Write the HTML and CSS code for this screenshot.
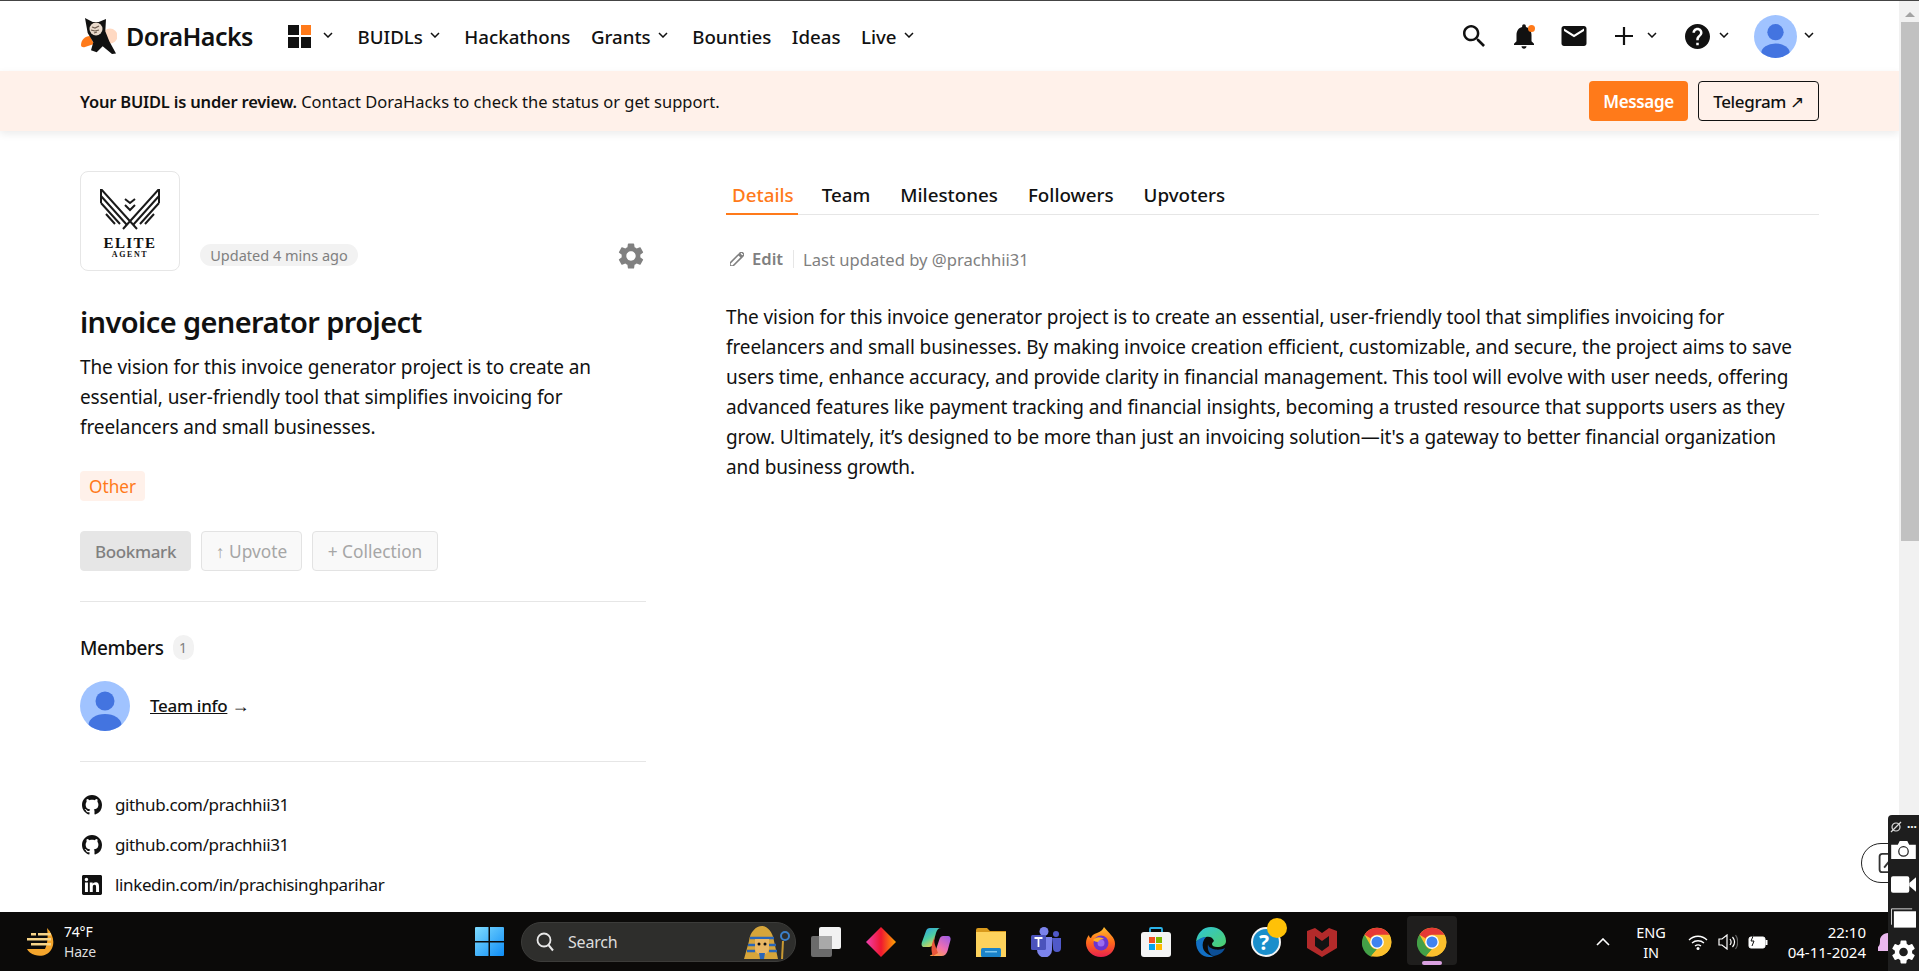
FILE: index.html
```html
<!DOCTYPE html>
<html lang="en">
<head>
<meta charset="utf-8">
<title>invoice generator project - DoraHacks</title>
<link rel="stylesheet" href="styles.css">
</head>
<body>
<svg class="defs" width="0" height="0" aria-hidden="true">
  <symbol id="chev" viewBox="0 0 10 6"><path d="M1 1l4 4 4-4" fill="none" stroke="currentColor" stroke-width="1.5"/></symbol>
  <symbol id="avatar" viewBox="0 0 50 50">
    <clipPath id="avc"><circle cx="25" cy="25" r="25"/></clipPath>
    <circle cx="25" cy="25" r="25" fill="#a0c3ff"/>
    <g clip-path="url(#avc)" fill="#4374e0"><circle cx="25" cy="20" r="9.5"/><ellipse cx="25" cy="44" rx="16.5" ry="11"/></g>
  </symbol>
  <symbol id="gh" viewBox="0 0 16 16"><path d="M8 0C3.58 0 0 3.58 0 8c0 3.54 2.29 6.53 5.47 7.59.4.07.55-.17.55-.38 0-.19-.01-.82-.01-1.49-2.01.37-2.53-.49-2.69-.94-.09-.23-.48-.94-.82-1.13-.28-.15-.68-.52-.01-.53.63-.01 1.08.58 1.23.82.72 1.21 1.87.87 2.33.66.07-.52.28-.87.51-1.07-1.78-.2-3.64-.89-3.64-3.95 0-.87.31-1.59.82-2.15-.08-.2-.36-1.02.08-2.12 0 0 .67-.21 2.2.82.64-.18 1.32-.27 2-.27.68 0 1.36.09 2 .27 1.53-1.04 2.2-.82 2.2-.82.44 1.1.16 1.92.08 2.12.51.56.82 1.27.82 2.15 0 3.07-1.87 3.75-3.65 3.95.29.25.54.73.54 1.48 0 1.07-.01 1.93-.01 2.2 0 .21.15.46.55.38A8.013 8.013 0 0016 8c0-4.42-3.58-8-8-8z" fill="#111"/></symbol>
  <symbol id="chrome" viewBox="0 0 48 48">
    <circle cx="24" cy="24" r="23" fill="#fbc02d"/>
    <path d="M24 1a23 23 0 0 1 19.9 11.5H24a11.5 11.5 0 0 0-10 5.8L4.1 12.5A23 23 0 0 1 24 1z" fill="#e53935"/>
    <path d="M4.1 12.5L14 29.8a11.5 11.5 0 0 0 10 5.7L14 47A23 23 0 0 1 4.1 12.5z" fill="#43a047"/>
    <path d="M14 47l10-11.5a11.5 11.5 0 0 0 10-5.7l9.9-17.3A23 23 0 0 1 24 47z" fill="#fbc02d"/>
    <circle cx="24" cy="24" r="11" fill="#fff"/><circle cx="24" cy="24" r="8.8" fill="#3f83f0"/>
  </symbol>
</svg>

<div class="screen">
  <div class="browser">
    <div class="page">
      <header class="nav">
        <div class="brand">
          <svg class="cat" viewBox="0 0 37 36">
            <circle cx="30" cy="18" r="7.500" fill="#ffd9c2"/>
            <path d="M1 27c0-5 4-9 9-9l4 8-9 3c-2 .5-4 0-4-2z" fill="#ff7a1a"/>
            <path d="M5 0l7.700 4h6l7.300-3-.7 12.300 4 10 6.700 12.200-4 0.500-9.300-7.700-6 6-5.700-2 2.300-8-5.600-9.300z" fill="#111"/>
            <circle cx="16" cy="11" r="6.500" fill="#e8d9cb"/>
            <path d="M12 9l3 1 4-2M11 12l4 1 4-1M14 15l3-1" stroke="#6b5a4d" stroke-width="1.200" fill="none"/>
          </svg>
          <span class="brand-name">DoraHacks</span>
        </div>
        <nav class="menu">
          <div class="menu-item">
            <span class="grid-icon"><i></i><i class="hot"></i><i></i><i></i></span>
            <svg class="chev"><use href="#chev"/></svg>
          </div>
          <a class="menu-item">BUIDLs<svg class="chev"><use href="#chev"/></svg></a>
          <a class="menu-item">Hackathons</a>
          <a class="menu-item">Grants<svg class="chev"><use href="#chev"/></svg></a>
          <a class="menu-item">Bounties</a>
          <a class="menu-item">Ideas</a>
          <a class="menu-item">Live<svg class="chev"><use href="#chev"/></svg></a>
        </nav>
        <div class="tools">
          <svg class="tool t-search" viewBox="3 3 17.5 17.5"><path d="M15.5 14h-.79l-.28-.27C15.41 12.59 16 11.11 16 9.5 16 5.91 13.09 3 9.5 3S3 5.91 3 9.5 5.91 16 9.5 16c1.61 0 3.09-.59 4.23-1.57l.27.28v.79l5 4.99L20.49 19l-4.99-5zm-6 0C7.01 14 5 11.99 5 9.5S7.01 5 9.5 5 14 7.01 14 9.5 11.99 14 9.5 14z" fill="#111"/></svg>
          <span class="bell-wrap">
            <svg class="tool t-bell" viewBox="4 2.5 16 19.5"><path d="M12 22c1.1 0 2-.9 2-2h-4c0 1.1.9 2 2 2zm6-6v-5c0-3.07-1.63-5.64-4.5-6.32V4c0-.83-.67-1.5-1.5-1.5s-1.5.67-1.5 1.5v.68C7.64 5.36 6 7.92 6 11v5l-2 2v1h16v-1l-2-2z" fill="#111"/></svg>
            <i class="dot"></i>
          </span>
          <svg class="tool t-mail" viewBox="2 4 20 16"><path d="M20 4H4c-1.1 0-2 .9-2 2v12c0 1.1.9 2 2 2h16c1.1 0 2-.9 2-2V6c0-1.1-.9-2-2-2zm0 4-8 5-8-5V6l8 5 8-5v2z" fill="#111"/></svg>
          <span class="tool-group g-plus">
            <svg class="tool t-plus" viewBox="0 0 18 18"><path d="M9 0v18M0 9h18" stroke="#111" stroke-width="2.2"/></svg>
            <svg class="chev"><use href="#chev"/></svg>
          </span>
          <span class="tool-group g-help">
            <svg class="tool t-help" viewBox="2 2 20 20"><path d="M12 2C6.48 2 2 6.48 2 12s4.48 10 10 10 10-4.48 10-10S17.52 2 12 2zm1 17h-2v-2h2v2zm2.07-7.75-.9.92C13.45 12.9 13 13.5 13 15h-2v-.5c0-1.1.45-2.1 1.17-2.83l1.24-1.26c.37-.36.59-.86.59-1.41 0-1.1-.9-2-2-2s-2 .9-2 2H8c0-2.21 1.79-4 4-4s4 1.79 4 4c0 .88-.36 1.68-.93 2.25z" fill="#111"/></svg>
            <svg class="chev"><use href="#chev"/></svg>
          </span>
          <span class="tool-group g-user">
            <svg class="nav-avatar"><use href="#avatar"/></svg>
            <svg class="chev"><use href="#chev"/></svg>
          </span>
        </div>
      </header>

      <div class="banner">
        <p class="banner-text"><strong>Your BUIDL is under review.</strong> Contact DoraHacks to check the status or get support.</p>
        <div class="banner-actions">
          <a class="btn-message">Message</a>
          <a class="btn-telegram">Telegram ↗</a>
        </div>
      </div>

      <main class="content">
        <aside class="side">
          <div class="head-row">
            <div class="logo-box">
              <svg class="wings" viewBox="0 0 60 41">
                <g fill="none" stroke="#1a1a1a" stroke-width="2">
                  <path d="M1 14V0l36 40M1 7l26 29M1 14l19 21M6 25l9 10"/>
                  <path d="M59 14V0L23 40M59 7L33 36M59 14L40 35M54 25l-9 10"/>
                  <path d="M25 10l5 4 5-4M25 16l5 5 5-5"/>
                </g>
              </svg>
              <span class="elite">ELITE</span>
              <span class="agent">AGENT</span>
            </div>
            <span class="updated">Updated 4 mins ago</span>
            <svg class="gear" viewBox="2.5 2 19 20"><path d="M19.14 12.94c.04-.3.06-.61.06-.94 0-.32-.02-.64-.07-.94l2.03-1.58c.18-.14.23-.41.12-.61l-1.92-3.32c-.12-.22-.37-.29-.59-.22l-2.39.96c-.5-.38-1.03-.7-1.62-.94l-.36-2.54c-.04-.24-.24-.41-.48-.41h-3.84c-.24 0-.43.17-.47.41l-.36 2.54c-.59.24-1.13.57-1.62.94l-2.39-.96c-.22-.08-.47 0-.59.22L2.74 8.87c-.12.21-.08.47.12.61l2.03 1.58c-.05.3-.09.63-.09.94s.02.64.07.94l-2.03 1.58c-.18.14-.23.41-.12.61l1.92 3.32c.12.22.37.29.59.22l2.39-.96c.5.38 1.03.7 1.62.94l.36 2.54c.05.24.24.41.48.41h3.84c.24 0 .44-.17.47-.41l.36-2.54c.59-.24 1.13-.56 1.62-.94l2.39.96c.22.08.47 0 .59-.22l1.92-3.32c.12-.22.07-.47-.12-.61l-2.01-1.58zM12 15.6c-1.98 0-3.6-1.62-3.6-3.6s1.62-3.6 3.6-3.6 3.6 1.62 3.6 3.6-1.62 3.6-3.6 3.6z" fill="#808080"/></svg>
          </div>
          <h1 class="title">invoice generator project</h1>
          <p class="summary">The vision for this invoice generator project is to create an essential, user-friendly tool that simplifies invoicing for freelancers and small businesses.</p>
          <span class="tag">Other</span>
          <div class="actions">
            <a class="act act-bookmark">Bookmark</a>
            <a class="act act-upvote">↑ Upvote</a>
            <a class="act act-collection">+ Collection</a>
          </div>
          <div class="members">
            <div class="members-head"><span class="members-title">Members</span><span class="count">1</span></div>
            <div class="team">
              <svg class="team-avatar"><use href="#avatar"/></svg>
              <span class="team-link"><u>Team info</u> <span class="go">→</span></span>
            </div>
          </div>
          <ul class="links">
            <li><svg class="link-icon"><use href="#gh"/></svg>github.com/prachhii31</li>
            <li><svg class="link-icon"><use href="#gh"/></svg>github.com/prachhii31</li>
            <li><svg class="link-icon" viewBox="0 0 24 24"><path d="M20.447 20.452h-3.554v-5.569c0-1.328-.027-3.037-1.852-3.037-1.853 0-2.136 1.445-2.136 2.939v5.667H9.351V9h3.414v1.561h.046c.477-.9 1.637-1.85 3.37-1.85 3.601 0 4.267 2.37 4.267 5.455v6.286zM5.337 7.433c-1.144 0-2.063-.926-2.063-2.065 0-1.138.92-2.063 2.063-2.063 1.14 0 2.064.925 2.064 2.063 0 1.139-.925 2.065-2.064 2.065zm1.782 13.019H3.555V9h3.564v11.452zM22.225 0H1.771C.792 0 0 .774 0 1.729v20.542C0 23.227.792 24 1.771 24h20.451C23.2 24 24 23.227 24 22.271V1.729C24 .774 23.2 0 22.222 0h.003z" fill="#111"/></svg>linkedin.com/in/prachisinghparihar</li>
          </ul>
        </aside>

        <section class="detail">
          <div class="tabs">
            <a class="tab tab-on">Details</a>
            <a class="tab">Team</a>
            <a class="tab">Milestones</a>
            <a class="tab">Followers</a>
            <a class="tab">Upvoters</a>
          </div>
          <div class="edit-row">
            <svg class="pencil" viewBox="3 3 18 18"><path d="M3 17.25V21h3.75L17.81 9.94l-3.75-3.75L3 17.25zM20.71 7.04c.39-.39.39-1.02 0-1.41l-2.34-2.34a.9959.9959 0 00-1.41 0l-1.83 1.83 3.75 3.75 1.83-1.83z" fill="none" stroke="#808080" stroke-width="2"/></svg>
            <span class="edit">Edit</span>
            <span class="last">Last updated by @prachhii31</span>
          </div>
          <p class="vision">The vision for this invoice generator project is to create an essential, user-friendly tool that simplifies invoicing for freelancers and small businesses. By making invoice creation efficient, customizable, and secure, the project aims to save users time, enhance accuracy, and provide clarity in financial management. This tool will evolve with user needs, offering advanced features like payment tracking and financial insights, becoming a trusted resource that supports users as they grow. Ultimately, it’s designed to be more than just an invoicing solution—it's a gateway to better financial organization and business growth.</p>
        </section>
      </main>
    </div>
    <div class="scrollbar">
      <span class="arrow"></span>
      <span class="thumb"></span>
    </div>
  </div>

  <footer class="taskbar">
    <div class="weather">
      <svg class="weather-icon" viewBox="0 0 30 28">
        <path d="M22 0c7 7 8 16 4 22-3 5-10 7-16 5-4-1-7-4-8-6h18c3-6 3-14 2-21z" fill="#f4a52c"/>
        <g fill="#f7d488"><rect x="6" y="5" width="5" height="2.5"/><rect x="13" y="5" width="13" height="2.5"/><rect x="2" y="10" width="24" height="2.5"/><rect x="6" y="15" width="20" height="2.5"/></g>
      </svg>
      <div class="weather-text"><span class="temp">74°F</span><span class="haze">Haze</span></div>
    </div>
    <div class="center">
      <svg class="win" viewBox="0 0 29 29">
        <defs><linearGradient id="wg" x1="0" y1="0" x2="1" y2="1"><stop offset="0" stop-color="#7fdcff"/><stop offset="1" stop-color="#0e8cf5"/></linearGradient></defs>
        <path d="M0 1a1 1 0 0 1 1-1h12.5v14H0zM15 0h13a1 1 0 0 1 1 1v13H15zM0 15.500h13.500V29H1a1 1 0 0 1-1-1zM15 15.500h14V28a1 1 0 0 1-1 1H15z" fill="url(#wg)"/>
      </svg>
      <div class="search">
        <svg class="search-icon" viewBox="0 0 18 20"><circle cx="8" cy="8" r="6.500" fill="none" stroke="#e8e8e8" stroke-width="1.800"/><path d="M12.500 13l4.500 5.500" stroke="#e8e8e8" stroke-width="2"/></svg>
        <span class="search-text">Search</span>
        <svg class="pharaoh" viewBox="0 0 54 34">
          <path d="M8 34l5-18c1-9 7-15 13-15s11 7 12 15l4 18z" fill="#d6a53a"/>
          <path d="M14 13h24M12 20h7M33 20h7M11 26h8M33 26h8" stroke="#2a66b8" stroke-width="2.500" fill="none"/>
          <path d="M19 14h14v9c0 4-3 7-7 7s-7-3-7-7z" fill="#e9b765"/>
          <circle cx="23" cy="19" r="1.500" fill="#111"/><circle cx="29" cy="19" r="1.500" fill="#111"/>
          <path d="M23 28h6l-1 6h-4z" fill="#2a66b8"/>
          <path d="M46 34l1-18" stroke="#c99a33" stroke-width="2"/>
          <circle cx="49" cy="11" r="4" fill="none" stroke="#3b7fc9" stroke-width="2"/>
        </svg>
      </div>
      <div class="apps-row">
        <svg class="app" viewBox="0 0 30 30"><rect x="0" y="9" width="21" height="21" rx="2" fill="#6b6b6b"/><rect x="8" y="0" width="22" height="22" rx="2" fill="#f2f2f2"/><rect x="8" y="9" width="13" height="13" fill="#a9a9a9"/></svg>
        <svg class="app" viewBox="0 0 30 30"><defs><linearGradient id="dg" x1="0" y1="0" x2="1" y2="0"><stop offset="0" stop-color="#f040b0"/><stop offset=".5" stop-color="#f01830"/><stop offset="1" stop-color="#ffa500"/></linearGradient></defs><path d="M15 0l15 15-15 15L0 15z" fill="url(#dg)"/></svg>
        <svg class="app" viewBox="0 0 30 30"><defs><linearGradient id="cg1" x1="0" y1="0" x2=".6" y2="1"><stop offset="0" stop-color="#2a9ee8"/><stop offset=".55" stop-color="#4fd0a0"/><stop offset="1" stop-color="#f6d24a"/></linearGradient><linearGradient id="cg2" x1="1" y1="0" x2=".3" y2="1"><stop offset="0" stop-color="#9a5ae8"/><stop offset=".6" stop-color="#f070b0"/><stop offset="1" stop-color="#f8a24a"/></linearGradient></defs><path d="M9 1h11c-3 0-4 2-5 5l-3 11c-.5 2-2 3-4 3H3c-2 0-3-2-2-5L5 4c.6-2 2-3 4-3z" fill="url(#cg1)"/><path d="M22 9h5c2 0 3 2 2.500 4l-3 11c-1 3-3 5-6 5h-10c-2 0-2-1-1-1 2 0 4-2 5-4l4-12c.7-2 2-3 3.500-3z" fill="url(#cg2)"/><path d="M14 8c-1 4-1 7 0 10l3 8-5 3c-2-4-2-10 0-15z" fill="#e8553a"/></svg>
        <svg class="app" viewBox="0 0 30 30"><path d="M0 3a2 2 0 0 1 2-2h9l3 3h16v3H0z" fill="#d99a1c"/><rect x="0" y="5" width="30" height="25" fill="#fdd25c"/><rect x="5" y="21" width="20" height="9" rx="1.500" fill="#1b83c9"/><rect x="9" y="24" width="12" height="1.500" fill="#7cc6ee"/></svg>
        <svg class="app" viewBox="0 0 30 30"><circle cx="13" cy="4.500" r="4.500" fill="#7b83eb"/><circle cx="25" cy="7" r="3" fill="#5059c9"/><path d="M21 11h9v10a4 4 0 0 1-8 0z" fill="#5059c9"/><path d="M6 10h15v13a6 6 0 0 1-15 0z" fill="#7b83eb"/><rect x="0" y="8" width="15" height="15" rx="1.500" fill="#4b53bc"/><path d="M3.500 11h8M7.500 11v9" stroke="#fff" stroke-width="1.800"/></svg>
        <svg class="app" viewBox="0 0 30 30"><defs><linearGradient id="ff" x1="0" y1="0" x2="0" y2="1"><stop offset="0" stop-color="#ffbd2e"/><stop offset=".5" stop-color="#ff6b1a"/><stop offset="1" stop-color="#e8204e"/></linearGradient></defs><path d="M18 0c2 3 5 5 7 8 3 3 4 6 4 9 0 7-6 13-14 13S0 24 0 16c0-3 1-6 3-8 0 2 1 3 2 3 1-3 3-4 6-5 3-1 6-3 7-6z" fill="url(#ff)"/><circle cx="15" cy="16" r="7.500" fill="#6a35d0"/><circle cx="15" cy="16" r="3.500" fill="#9a6cf0"/><path d="M7 13c4-4 8-3 11-1-3 0-5 1-6 3-2 0-4-1-5-2z" fill="#ffb02a"/></svg>
        <svg class="app" viewBox="0 0 30 30"><path d="M9 6V2a1 1 0 0 1 1-1h10a1 1 0 0 1 1 1v4" fill="none" stroke="#2bb4ea" stroke-width="1.800"/><rect x="0" y="5" width="30" height="25" rx="3" fill="#f4f4f4"/><rect x="8" y="10" width="6" height="6" fill="#f25022"/><rect x="15" y="10" width="6" height="6" fill="#7fba00"/><rect x="8" y="17" width="6" height="6" fill="#00a4ef"/><rect x="15" y="17" width="6" height="6" fill="#ffb900"/></svg>
        <svg class="app" viewBox="0 0 30 30"><defs><linearGradient id="eg" x1="0" y1="0" x2="1" y2="1"><stop offset="0" stop-color="#2ec4d8"/><stop offset="1" stop-color="#4fd06a"/></linearGradient></defs><path d="M0 15C1 6 7 0 15 0c8 0 15 6 15 14 0 4-4 6-9 6-3 0-5-1-5-3 0-1 1-2 2-3-1-4-5-5-8-4-5 1-8 3-10 5z" fill="url(#eg)"/><path d="M0 15c2-3 6-5 10-5-3 3-4 7-3 11 1 4 6 8 11 8-2 1-3 1-5 1C6 30 0 24 0 15z" fill="#1270c4"/><path d="M18 29c5-1 9-3 11-8-3 2-9 2-12 1-3-1-5-3-5-5-1 5 1 11 6 12z" fill="#0c4f96"/></svg>
        <span class="help-app">
          <svg class="app" viewBox="0 0 30 30"><circle cx="15" cy="15" r="14" fill="#1a8ecb" stroke="#f4f4f4" stroke-width="2"/></svg>
          <span class="help-q">?</span>
          <i class="help-badge"></i>
        </span>
        <svg class="app" viewBox="0 0 30 30"><path d="M0 4l8-3 7 5 7-5 8 3v17l-15 9L0 21z" fill="#b32a2a"/><path d="M8 9l7 5 7-5v10l-7 5-7-5z" fill="#131313"/></svg>
        <svg class="app"><use href="#chrome"/></svg>
        <span class="active-app">
          <svg class="app"><use href="#chrome"/></svg>
          <i class="indicator"></i>
        </span>
      </div>
    </div>
    <div class="tray">
      <svg class="tray-up" viewBox="0 0 14 8"><path d="M1 7l6-6 6 6" fill="none" stroke="#fff" stroke-width="1.600"/></svg>
      <div class="lang"><span>ENG</span><span>IN</span></div>
      <svg class="tray-wifi" viewBox="0 0 20 16"><g fill="none" stroke="#fff" stroke-width="1.300"><path d="M1 6c5-5 13-5 18 0M4 9c3.500-3 8.500-3 12 0M7 12c2-1.500 4-1.500 6 0"/></g><circle cx="10" cy="14.500" r="1.500" fill="#fff"/></svg>
      <svg class="tray-sound" viewBox="0 0 20 16"><path d="M1 5h3l5-4v14l-5-4H1z" fill="none" stroke="#fff" stroke-width="1.200"/><path d="M12 5c1.500 2 1.500 4 0 6M14.500 3c2.500 3 2.500 7 0 10" fill="none" stroke="#fff" stroke-width="1.200"/><path d="M17.500 1c3 4 3 10 0 14" fill="none" stroke="#666" stroke-width="1.200"/></svg>
      <svg class="tray-batt" viewBox="0 0 20 16"><rect x="1" y="3" width="16" height="11" rx="2" fill="#fff" stroke="#fff"/><rect x="17.500" y="6" width="2" height="5" fill="#fff"/><path d="M6 0L3 7h3L4 12" fill="#fff" stroke="#111"/></svg>
      <div class="clock"><span>22:10</span><span>04-11-2024</span></div>
    </div>
  </footer>

  <div class="float-pill"><svg class="float-icon" viewBox="0 0 16 24"><path d="M14 2H4a3 3 0 0 0-3 3v14a3 3 0 0 0 3 3h10" fill="none" stroke="#333" stroke-width="2"/><path d="M6 17l8-10" stroke="#333" stroke-width="2"/></svg></div>
  <svg class="tray-bell" viewBox="0 0 12 20"><path d="M0 14c2-2 2-4 2-7s3-7 8-7h2v18H0z" fill="#eab8ee"/></svg>
  <aside class="widget">
    <div class="widget-top">
      <svg class="w-link" viewBox="0 0 12 12"><circle cx="6" cy="6" r="4" fill="none" stroke="#ddd" stroke-width="1.200"/><path d="M1 11L11 1" stroke="#ddd" stroke-width="1.200"/></svg>
      <span class="w-dots">···</span>
    </div>
    <svg class="w-cam" viewBox="0 0 26 19"><path d="M0 4h7l2-4h8l2 4h7v15H0z" fill="#fff"/><circle cx="13" cy="11" r="5" fill="none" stroke="#222" stroke-width="1.300"/></svg>
    <svg class="w-vid" viewBox="0 0 26 17"><rect x="0" y="0" width="19" height="17" rx="2" fill="#fff"/><path d="M19 7l7-6v15l-7-6z" fill="#fff"/></svg>
    <svg class="w-win" viewBox="0 0 26 20"><path d="M.500 17V.500H22" fill="none" stroke="#ddd" stroke-width="1"/><rect x="3" y="3" width="23" height="17" fill="#fff"/></svg>
    <svg class="w-gear" viewBox="2.500 2 19 20"><path d="M19.140 12.940c.04-.3.06-.61.06-.94 0-.32-.02-.64-.07-.94l2.030-1.580c.18-.14.23-.41.12-.61l-1.920-3.320c-.12-.22-.37-.29-.59-.22l-2.390.96c-.5-.38-1.030-.7-1.620-.94l-.36-2.540c-.04-.24-.24-.41-.48-.41h-3.840c-.24 0-.43.17-.47.41l-.36 2.540c-.59.24-1.130.57-1.620.94l-2.390-.96c-.22-.08-.47 0-.59.22L2.740 8.870c-.12.21-.08.47.12.61l2.030 1.580c-.05.3-.09.63-.09.94s.02.64.07.94l-2.030 1.580c-.18.14-.23.41-.12.61l1.920 3.320c.12.22.37.29.59.22l2.390-.96c.5.38 1.030.7 1.620.94l.36 2.54c.05.24.24.41.48.41h3.840c.24 0 .44-.17.47-.41l.36-2.54c.59-.24 1.130-.56 1.620-.94l2.39.96c.22.08.47 0 .59-.22l1.920-3.320c.12-.22.07-.47-.12-.61l-2.010-1.580zM12 15.600c-1.980 0-3.600-1.620-3.600-3.600s1.620-3.600 3.600-3.600 3.600 1.620 3.600 3.600-1.620 3.600-3.600 3.600z" fill="#fff"/></svg>
  </aside>
</div>
</body>
</html>
```
FILE: styles.css
```css
* { box-sizing: border-box; }
html, body { margin: 0; height: 100%; overflow: hidden; }
body { font-family: "Noto Sans", "Open Sans", sans-serif; color: #111; background: #fff; }
p, h1, ul { margin: 0; padding: 0; }
ul { list-style: none; }
a { color: inherit; text-decoration: none; }
.defs { position: absolute; }
.screen { position: relative; height: 971px; display: flex; flex-direction: column; border-top: 1px solid #444; }

.browser { height: 911px; display: flex; overflow: hidden; }
.page { width: 1899px; flex: none; overflow: hidden; }
.scrollbar { width: 20px; flex: none; background: #f1f1f1; display: flex; flex-direction: column; align-items: center; padding: 0 0 0 2px; }
.arrow { width: 0; height: 0; margin: 11px 0 5px; border: 5px solid transparent; border-top: 0; border-bottom: 5px solid #a3a3a3; }
.thumb { width: 100%; height: 519px; background: #c1c1c1; }

.nav { height: 70px; display: flex; align-items: center; padding: 0 0 0 80px; }
.brand { display: flex; align-items: center; width: 208px; flex: none; }
.cat { width: 37px; height: 36px; margin-right: 9px; flex: none; }
.brand-name { font-size: 25px; font-weight: 600; letter-spacing: -.55px; }
.menu { display: flex; align-items: center; gap: 20.500px; }
.menu-item { display: flex; align-items: center; font-size: 18.700px; font-weight: 500; }
.grid-icon { width: 23px; height: 23px; display: grid; grid-template-columns: 1fr 1fr; gap: 2px; margin-right: 5px; }
.grid-icon i { background: #111; }
.grid-icon .hot { background: #ff7a1a; }
.chev { width: 10px; height: 6px; color: #111; margin: -2px 4px 0 7px; flex: none; }
.tools { margin-left: auto; display: flex; align-items: center; padding-right: 81px; }
.tool { display: block; flex: none; }
.t-search { width: 22px; height: 22px; }
.bell-wrap { position: relative; display: block; margin-left: 29px; }
.t-bell { width: 20px; height: 25px; }
.dot { position: absolute; right: -1px; top: 1px; width: 7px; height: 7px; border-radius: 50%; background: #ff7a1a; }
.t-mail { width: 26px; height: 20px; margin-left: 27px; }
.tool-group { display: flex; align-items: center; }
.g-plus { margin-left: 28px; }
.t-plus { width: 18px; height: 18px; margin-right: 7px; }
.g-help { margin-left: 24px; }
.t-help { width: 25px; height: 25px; margin-right: 2px; }
.g-user { margin-left: 21px; }
.nav-avatar { width: 43px; height: 43px; flex: none; }

.banner { height: 60px; background: #fff1ea; display: flex; align-items: center; justify-content: space-between; padding: 0 80px; box-shadow: 0 3px 8px rgba(0,0,0,.08); position: relative; }
.banner-text { font-size: 16.500px; }
.banner-text strong { font-weight: 600; letter-spacing: -.2px; }
.banner-actions { display: flex; gap: 10px; }
.btn-message, .btn-telegram { height: 40px; display: flex; align-items: center; justify-content: center; border-radius: 4px; font-size: 17px; letter-spacing: -.35px; font-weight: 500; }
.btn-message { width: 99px; background: #ff7a1a; color: #fff; font-weight: 600; }
.btn-telegram { width: 121px; border: 1px solid #111; }

.content { display: flex; padding: 40px 80px 0; gap: 80px; }
.side { width: 566px; flex: none; }
.head-row { display: flex; align-items: flex-end; position: relative; }
.logo-box { width: 100px; height: 100px; border: 1px solid #e6e6e6; border-radius: 8px; display: flex; flex-direction: column; align-items: center; padding-top: 17px; }
.wings { width: 60px; height: 41px; flex: none; }
.elite { font-family: "Liberation Serif", serif; font-weight: 700; font-size: 15px; letter-spacing: 1.400px; line-height: 14px; margin-top: 6px; }
.agent { font-family: "Liberation Serif", serif; font-weight: 700; font-size: 8px; letter-spacing: 1.600px; line-height: 8px; margin-top: 1px; }
.updated { margin: 0 0 5px 20px; width: 158px; height: 22px; display: flex; align-items: center; justify-content: center; background: #f2f2f2; border-radius: 11px; color: #808080; font-size: 14.500px; }
.gear { width: 26px; height: 26px; position: absolute; left: 538px; top: 72px; }
.title { font-size: 29px; font-weight: 600; letter-spacing: -.6px; line-height: 40px; margin-top: 31px; }
.summary { font-size: 19px; letter-spacing: -.1px; line-height: 30px; margin-top: 10px; }
.tag { display: flex; width: fit-content; align-items: center; height: 30px; padding: 0 9px; margin-top: 29px; border-radius: 4px; background: #fff1ea; color: #ff7a1a; font-size: 17.200px; }
.actions { display: flex; gap: 10px; margin-top: 30px; }
.act { height: 40px; display: flex; align-items: center; justify-content: center; border-radius: 4px; font-size: 17.300px; color: #a6a6a6; background: #f9f9f9; border: 1px solid #e3e3e3; }
.act-bookmark { width: 111px; background: #e6e6e6; border-color: #e6e6e6; color: #808080; font-weight: 500; font-size: 17px; letter-spacing: -.35px; }
.act-upvote { width: 101px; }
.act-collection { width: 126px; }
.members { margin-top: 30px; border-top: 1px solid #e6e6e6; border-bottom: 1px solid #e6e6e6; padding: 33px 0 30px; }
.members-head { display: flex; align-items: center; height: 25px; }
.members-title { font-size: 19px; font-weight: 500; letter-spacing: -.4px; }
.count { width: 21px; height: 25px; margin-left: 9px; border-radius: 11px; background: #f2f2f2; color: #808080; font-size: 14px; display: flex; align-items: center; justify-content: center; }
.team { display: flex; align-items: center; margin-top: 21px; }
.team-avatar { width: 50px; height: 50px; flex: none; }
.team-link { margin-left: 20px; font-size: 17px; font-weight: 500; letter-spacing: -.3px; line-height: 24px; }
.go { font-family: "Liberation Sans", sans-serif; font-size: 18px; line-height: 18px; }
.links { margin-top: 30px; display: flex; flex-direction: column; gap: 15px; font-size: 17px; letter-spacing: -.37px; }
.links li { display: flex; align-items: center; height: 25px; }
.link-icon { width: 20px; height: 20px; margin: 0 13px 0 2px; flex: none; }

.detail { flex: 1; min-width: 0; }
.tabs { display: flex; gap: 18px; border-bottom: 1px solid #e6e6e6; height: 44px; }
.tab { padding: 0 6px; height: 44px; font-size: 18.800px; font-weight: 500; line-height: 48px; }
.tab-on { color: #ff7a1a; border-bottom: 2px solid #ff7a1a; padding-right: 4px; }
.edit-row { display: flex; align-items: center; height: 26px; margin-top: 31px; color: #808080; font-size: 16.600px; }
.pencil { width: 14px; height: 14px; margin-left: 4px; }
.edit { margin-left: 8px; font-weight: 600; padding-right: 10px; border-right: 1px solid #e6e6e6; line-height: 18px; }
.last { margin-left: 9px; }
.vision { font-size: 19px; letter-spacing: -.1px; line-height: 30.100px; margin-top: 29.500px; padding-right: 20px; }

.taskbar { height: 59px; flex: none; background: #0b0a09; display: flex; align-items: center; color: #fff; position: relative; }
.weather { display: flex; align-items: center; width: 475px; padding-left: 25px; flex: none; }
.weather-icon { width: 30px; height: 28px; flex: none; }
.weather-text { display: flex; flex-direction: column; margin-left: 9px; font-size: 14px; line-height: 20px; letter-spacing: -.2px; }
.haze { color: #ddd; }
.center { display: flex; align-items: center; width: 991px; flex: none; }
.win { width: 29px; height: 29px; flex: none; }
.search { width: 275px; height: 40px; margin-left: 17px; border-radius: 20px; background: #2e2e2c; border: 1px solid #3c3c3a; display: flex; align-items: center; padding-left: 14px; position: relative; flex: none; }
.search-icon { width: 18px; height: 20px; }
.search-text { margin-left: 14px; font-size: 16px; letter-spacing: -.2px; color: #ddd; }
.pharaoh { width: 54px; height: 34px; margin-left: auto; margin-right: 5px; }
.apps-row { display: flex; align-items: center; gap: 25px; margin-left: 15px; }
.app { width: 30px; height: 30px; display: block; flex: none; }
.help-app { position: relative; display: block; width: 30px; height: 30px; margin-right: 1px; }
.help-q { position: absolute; left: 8px; top: 1px; font-size: 21px; font-weight: 700; line-height: 28px; color: #fff; }
.help-badge { position: absolute; left: 16px; top: -9px; width: 20px; height: 20px; border-radius: 50%; background: #ffc107; }
.active-app { position: relative; display: block; width: 30px; height: 30px; }
.active-app::before { content: ""; position: absolute; left: -10px; top: -11px; width: 50px; height: 49px; background: #1f1e1d; border-radius: 4px; }
.active-app .app { position: relative; }
.indicator { position: absolute; left: 5px; top: 34px; width: 20px; height: 4px; border-radius: 2px; background: #d9a0e0; }
.tray { display: flex; align-items: center; flex: 1; padding-right: 53px; font-size: 15px; }
.tray-up { width: 14px; height: 8px; margin-left: 130px; flex: none; }
.lang { display: flex; flex-direction: column; align-items: center; width: 36px; margin-left: 23px; line-height: 20px; font-size: 14.500px; letter-spacing: -.1px; }
.tray-wifi { width: 20px; height: 16px; margin-left: 19px; }
.tray-sound { width: 20px; height: 16px; margin-left: 10px; }
.tray-batt { width: 20px; height: 16px; margin-left: 10px; }
.clock { display: flex; flex-direction: column; align-items: flex-end; margin-left: auto; line-height: 20px; }

.float-pill { position: absolute; left: 1861px; top: 842px; width: 40px; height: 40px; border: 1px solid #222; border-radius: 20px 0 0 20px; background: #fff; padding: 8px 0 0 16px; }
.float-icon { display: block; width: 16px; height: 22px; }
.tray-bell { position: absolute; left: 1878px; top: 932px; width: 12px; height: 20px; }
.widget { position: absolute; left: 1888px; top: 814px; width: 31px; height: 156px; background: #1e1e1e; border-radius: 4px 0 0 0; display: flex; flex-direction: column; align-items: center; padding-top: 5px; }
.widget-top { display: flex; align-items: center; justify-content: space-between; width: 27px; height: 14px; }
.w-link { width: 12px; height: 12px; }
.w-dots { font-size: 12px; line-height: 12px; color: #fff; font-weight: 700; }
.w-cam { width: 25px; height: 18px; margin-top: 7px; }
.w-vid { width: 25px; height: 17px; margin-top: 17px; }
.w-win { width: 25px; height: 20px; margin-top: 15px; }
.w-gear { width: 25px; height: 24px; margin-top: 12px; }
```
